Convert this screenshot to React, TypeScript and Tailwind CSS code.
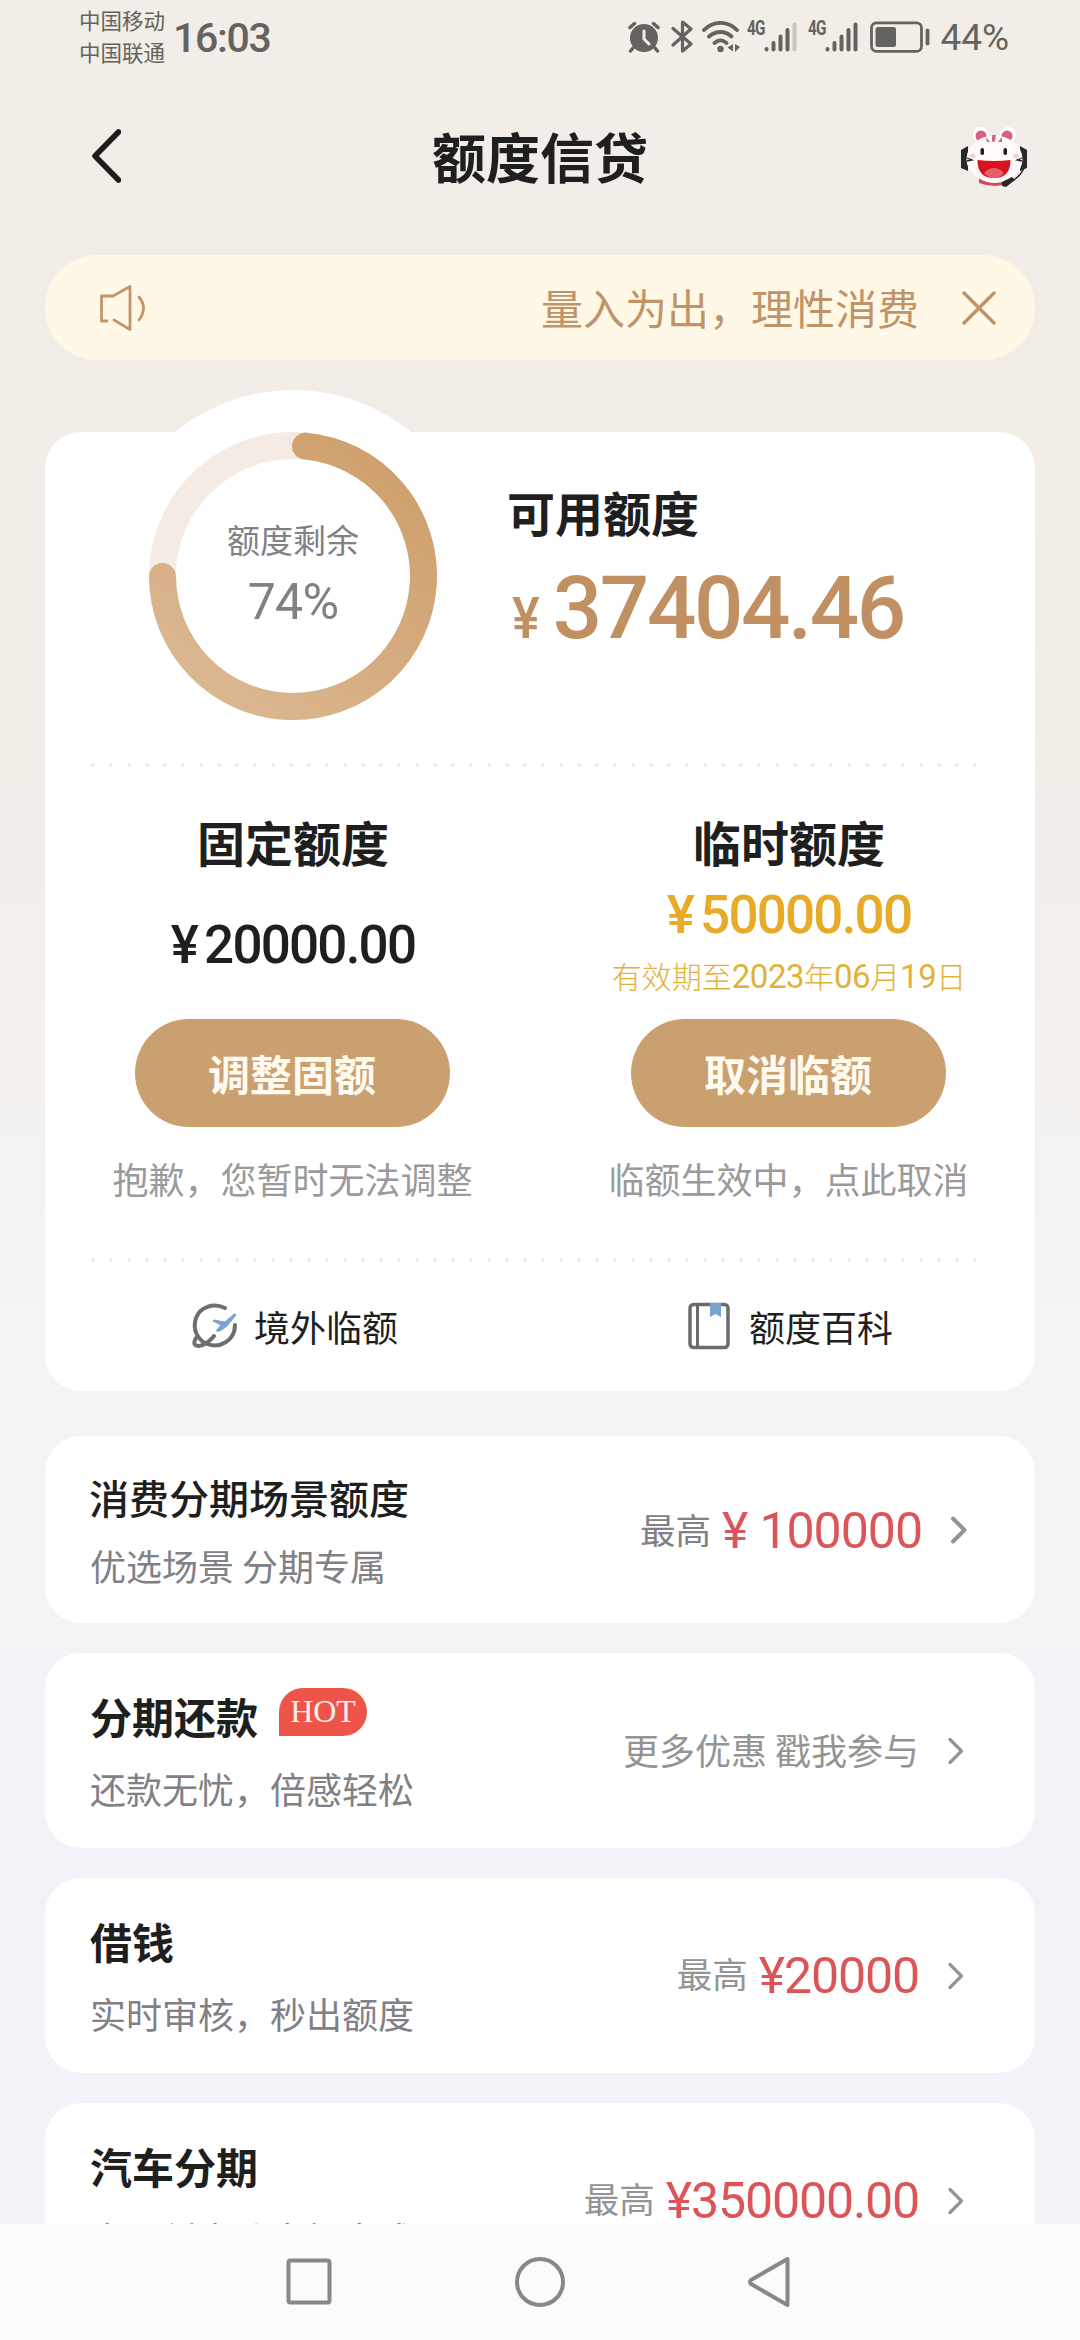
import clsx from 'clsx';

interface ProductCardProps {
  title: string;
  subtitle: string;
  prefix?: string;
  amount?: string;
  note?: string;
  hot?: boolean;
}

const products: ProductCardProps[] = [
  { title: '分期还款', subtitle: '还款无忧，倍感轻松', note: '更多优惠 戳我参与', hot: true },
  { title: '借钱', subtitle: '实时审核，秒出额度', prefix: '最高', amount: '¥20000' },
  { title: '汽车分期', subtitle: '享用低定价享轻享成', prefix: '最高', amount: '¥350000.00' },
];

const Signal = ({ weak }: { weak?: boolean }) => (
  <div className="flex items-start">
    <span className="w-[17px] h-[20px] -mt-[3px] font-[Roboto] font-bold text-[18px] leading-[20px] tracking-[-1px] origin-left scale-x-85 scale-y-110">4G</span>
    <svg className="w-[33px] h-8" viewBox="17 0 33 32" fill="none" stroke="#65635e" strokeWidth="4" strokeLinecap="round">
      <path d="M19.500 28v.5M26.500 22v6.500M33.500 15.500v13M40.500 9v19.500" />
      <path d="M47.500 3.500v25" stroke={weak ? '#c9c5bf' : '#65635e'} />
    </svg>
  </div>
);

const StatusBar = () => (
  <div className="h-[76px] flex items-start pl-[79px] text-[#65635e]">
    <div className="text-[21.500px] leading-8 pt-[4px] w-[94px] whitespace-nowrap">
      <div>中国移动</div>
      <div>中国联通</div>
    </div>
    <div className="font-[Roboto] font-medium text-[41px] leading-[76px] tracking-[-1.3px]">16:03</div>
    <div className="ml-auto flex items-center pt-[19px] pr-[71px]">
      <svg className="w-8 h-8" viewBox="0 0 32 32" fill="none" strokeLinecap="round">
        <circle cx="16" cy="17" r="14" fill="#65635e" />
        <path d="M2 6.500 6.500 2.500M30 6.500l-4.500-4M5 27l-2.500 3M27 27l2.500 3" stroke="#65635e" strokeWidth="3.500" />
        <path d="M16 10v8l5 5" stroke="#f2ede7" strokeWidth="3" />
      </svg>
      <svg className="w-[22px] h-[33px] ml-[11px]" viewBox="0 0 22 33" fill="none" stroke="#65635e" strokeWidth="3.200" strokeLinecap="round" strokeLinejoin="round">
        <path d="M2 8.500 20 24l-8.500 7V2L20 9 2 25" />
      </svg>
      <svg className="w-[38px] h-8 ml-[9px]" viewBox="0 0 38 32" fill="none" stroke="#65635e" strokeWidth="3.800" strokeLinecap="round">
        <path d="M2 9C11-.500 26-.500 35 9M7 15.500c7-6 16-6 22.500 0M12.500 22c4-3.500 8-3.500 12 0" />
        <circle cx="18.500" cy="28" r="3.200" fill="#65635e" stroke="none" />
        <path d="m31 23v7.500l-5.500-4zM33 23v8l5-5z" fill="#65635e" stroke="none" />
      </svg>
      <div className="ml-[7px] flex gap-[11px]">
        <Signal weak />
        <Signal />
      </div>
      <svg className="w-[60px] h-8 ml-[12px]" viewBox="0 0 60 32" fill="none" stroke="#65635e">
        <rect x="1.500" y="1.800" width="50" height="28.500" rx="5" strokeWidth="2.800" />
        <rect x="5.500" y="6" width="20.500" height="20" rx="2.500" fill="#65635e" stroke="none" />
        <path d="M57.500 9.500v13" strokeWidth="3.800" strokeLinecap="round" />
      </svg>
      <span className="ml-[11px] font-[Roboto] text-[37px] leading-8 tracking-[-0.1px] pt-[3px]">44%</span>
    </div>
  </div>
);

const Mascot = () => (
  <svg className="w-[70px] h-[64px]" viewBox="0 0 70 64">
    <path d="M20 52q15 10 32 0v5q-16 6-32 0z" fill="#d4475c" />
    <path d="M9 20 2 24v18l7 3zM61 20l7 4v18l-7 3z" fill="#27282a" />
    <circle cx="22" cy="9" r="8" fill="#fff" />
    <circle cx="49" cy="9" r="8" fill="#fff" />
    <circle cx="22" cy="10" r="5.500" fill="#d9607a" />
    <circle cx="48" cy="10" r="5.500" fill="#d9607a" />
    <ellipse cx="35.500" cy="33" rx="28" ry="23.500" fill="#fefafa" />
    <path d="m27 11 4 5h-3zM43 11l-4 5h4zM33 9h4l-1 6q-1.500 2-3 0z" fill="#cf6b80" />
    <ellipse cx="13.500" cy="30" rx="3" ry="2" fill="#f5cfd3" />
    <ellipse cx="57" cy="30" rx="3" ry="2" fill="#f5cfd3" />
    <rect x="21.500" y="22" width="3.500" height="7" rx="1.700" fill="#1c1c1e" />
    <rect x="44.500" y="22" width="3.500" height="7" rx="1.700" fill="#1c1c1e" />
    <path d="M18.500 34q17 2 33 0 0 18-16.500 18T18.500 34" fill="#d8121f" />
    <path d="M25 47q10-10 20 0-4 5-10 5t-10-5" fill="#e4616c" />
    <path d="m8 32 5 2-5 1M63 32l-5 2 5 1M65 42q-4 10-16 15" fill="none" stroke="#27282a" strokeWidth="1.300" />
    <path d="m43 56 10-5 3 3-9 7-4-1z" fill="#27282a" />
  </svg>
);

const Header = () => (
  <div className="h-[179px] pt-[50px] flex items-start justify-between pl-[91px] pr-[51px]">
    <svg className="w-[30px] h-[60px]" viewBox="0 0 30 60" fill="none" stroke="#1f1c1a" strokeWidth="5.500" strokeLinecap="round" strokeLinejoin="round">
      <path d="M27.500 6 4 30l23.500 24" />
    </svg>
    <h1 className="text-[54px] leading-[60px] font-bold text-[#1f1f1f]">额度信贷</h1>
    <Mascot />
  </div>
);

const Banner = () => (
  <div className="mx-[45px] h-[105px] rounded-full bg-[#fff8e7] flex items-center pl-[54px] pr-[39px]">
    <svg className="w-12 h-12" viewBox="0 0 48 48" fill="none" stroke="#c2966a" strokeWidth="2.800" strokeLinecap="round" strokeLinejoin="round">
      <path d="M8 37H2.500V12H14L31 2.500v43L15 36M40 13q9 11 0 23" />
    </svg>
    <span className="ml-auto text-[42px] leading-[58px] -mt-[2px] text-[#bf9468]">量入为出，理性消费</span>
    <svg className="w-[34px] h-[34px] ml-[43px]" viewBox="0 0 34 34" fill="none" stroke="#bf9468" strokeWidth="3.500" strokeLinecap="round">
      <path d="m2 2 30 30M32 2 2 32" />
    </svg>
  </div>
);

// Arc runs clockwise from just past 12 o'clock round to 9 o'clock
const LimitRing = () => (
  <div className="w-[372px] h-[372px] -mt-[42px] ml-[62px] rounded-full bg-white grid place-items-center">
    <svg className="col-start-1 row-start-1" width="288" height="288" viewBox="0 0 288 288" fill="none" strokeWidth="27">
      <defs>
        <linearGradient id="ring" x1="0.900" y1="0.1" x2="0.2" y2="1">
          <stop offset="0" stopColor="#cfa06d" />
          <stop offset="1" stopColor="#dbb791" />
        </linearGradient>
      </defs>
      <circle cx="144" cy="144" r="130.500" stroke="#f4ece4" />
      <path d="M156.500 14.100A130.500 130.500 0 1 1 13.500 144.500" stroke="url(#ring)" strokeLinecap="round" />
    </svg>
    <div className="col-start-1 row-start-1 text-center text-[#808085]">
      <div className="text-[33px] leading-[50px]">额度剩余</div>
      <div className="mt-[2px] font-[Roboto] text-[50px] leading-[72px] -tracking-[0.8px]">74%</div>
    </div>
  </div>
);

const DottedLine = () => (
  <svg className="block ml-[46px] w-[888px] h-[4px]" viewBox="0 0 888 4">
    <path d="M2 2H888" stroke="#e8e8e8" strokeWidth="3.300" strokeDasharray="0 18" strokeLinecap="round" />
  </svg>
);

interface LimitColumnProps {
  title: string;
  button: string;
  caption: string;
  children: React.ReactNode;
}

const LimitColumn = ({ title, button, caption, children }: LimitColumnProps) => (
  <div className="w-[496px] flex flex-col items-center">
    <h2 className="text-[48px] leading-[60px] font-bold text-[#1f1f1f]">{title}</h2>
    <div className="h-[148px] flex flex-col items-center">{children}</div>
    <button className="w-[315px] h-[108px] -ml-[2px] rounded-full bg-[#cba070] text-[42px] leading-[60px] font-bold text-[#fffaf0]">
      {button}
    </button>
    <p className="mt-[26px] -ml-px text-[36px] leading-[50px] text-[#9a9a9a] whitespace-nowrap">{caption}</p>
  </div>
);

const amountClass = 'font-[Roboto] font-medium text-[53px] leading-[60px] -tracking-[1.8px]';

const Chevron = ({ bold }: { bold?: boolean }) => (
  <svg className={clsx('w-[18px] h-[30px]', bold ? 'ml-[28px]' : 'ml-[28px]')} viewBox="0 0 18 30" fill="none" stroke="#949494" strokeWidth={bold ? 4 : 3.2} strokeLinecap="round" strokeLinejoin="round">
    <path d="m3 3.500 11.500 11.500L3 26.500" />
  </svg>
);

const ProductCard = ({ title, subtitle, prefix, amount, note, hot }: ProductCardProps) => (
  <div className="h-[195px] shrink-0 rounded-[36px] bg-white flex items-center pl-[45px] pr-[70px]">
    <div>
      <div className="flex items-center h-[60px]">
        <h3 className="text-[42px] leading-[60px] font-bold text-[#1f1f1f]">{title}</h3>
        {hot && (
          <span className="ml-[21px] mb-[8px] w-[88px] h-[48px] rounded-[24px] rounded-bl-none bg-[#ee5449] text-center font-['Liberation_Serif'] text-[32px] leading-[47px] text-[#fff3ee]">
            HOT
          </span>
        )}
      </div>
      <p className="mt-[15px] mb-px text-[36px] leading-[54px] text-[#808085]">{subtitle}</p>
    </div>
    <div className="ml-auto flex items-center">
      {note && <span className="text-[36px] leading-[54px] text-[#949494] -mt-[4px]">{note}</span>}
      {prefix && <span className="text-[35.500px] leading-[54px] text-[#949494] -mt-[6px]">{prefix}</span>}
      {amount && (
        <span className="ml-[11px] font-[Roboto] text-[50px] leading-[54px] -tracking-[1.1px] text-[#dc5458]">{amount}</span>
      )}
      <Chevron />
    </div>
  </div>
);

const NavBar = () => (
  <div className="h-[116px] shrink-0 bg-[#fbfbfb]">
    <svg className="w-full h-[116px]" viewBox="0 0 1080 116" fill="none" stroke="#888" strokeWidth="4" strokeLinejoin="round">
      <rect x="288.500" y="36.500" width="41" height="42" rx="2" />
      <circle cx="540" cy="58" r="23" />
      <path d="M787.500 35v46L751 60q-2-2 0-4z" />
    </svg>
  </div>
);

export default function App() {
  return (
    <div className="w-[1080px] h-[2340px] overflow-hidden flex flex-col bg-[linear-gradient(#f2ede7_0px,#f2ece7_750px,#f4f4f4_1330px,#f4f4f4_1640px,#f2f3f8_1670px)] font-['Noto_Sans_CJK_SC',sans-serif]">
      <StatusBar />
      <Header />
      <Banner />

      <section className="mx-[45px] mt-[72px] h-[959px] shrink-0 rounded-[36px] bg-white">
        <div className="flex h-[331px]">
          <LimitRing />
          <div className="ml-[28px] pt-[49px]">
            <h2 className="text-[48px] leading-[60px] font-bold text-[#1f1f1f]">可用额度</h2>
            <div className="mt-[17px] flex items-baseline font-[Roboto] font-medium text-[#c09062]">
              <span className="text-[58px] leading-[100px] ml-[5px] origin-left scale-x-90">¥</span>
              <span className="ml-[10px] text-[87px] leading-[100px] -tracking-[2.4px]">37404.46</span>
            </div>
          </div>
        </div>
        <DottedLine />

        <div className="mt-[44px] flex w-[992px]">
          <LimitColumn title="固定额度" button="调整固额" caption="抱歉，您暂时无法调整">
            <div className={clsx(amountClass, 'mt-[44px] text-[#1f1f1f]')}>
              <span className="mr-[7px]">¥</span>20000.00
            </div>
          </LimitColumn>
          <LimitColumn title="临时额度" button="取消临额" caption="临额生效中，点此取消">
            <div className={clsx(amountClass, 'mt-[14px] text-[#e7ab28]')}>
              <span className="mr-[7px]">¥</span>50000.00
            </div>
            <div className="text-[30px] leading-[60px] font-light text-[#e2b13c] whitespace-nowrap">
              有效期至<span className="font-[Roboto] font-normal text-[33px] -tracking-[0.5px]">2023</span>年
              <span className="font-[Roboto] font-normal text-[33px] -tracking-[0.5px]">06</span>月
              <span className="font-[Roboto] font-normal text-[33px] -tracking-[0.5px]">19</span>日
            </div>
          </LimitColumn>
        </div>

        <div className="mt-[55px]">
          <DottedLine />
        </div>
        <div className="mt-[34px] flex w-[992px] text-[36px] leading-[60px] text-[#1f1f1f]">
          <div className="w-[496px] pl-[147px] flex items-center">
            <svg className="w-[46px] h-[46px] mr-[16px]" viewBox="0 0 46 46" fill="none" stroke="#6e6e6e" strokeWidth="4" strokeLinecap="round" strokeLinejoin="round">
              <path d="M33 5C21-.500 8 4 4 15 0 27 6 36 13 40c15 7 30-3 30-18" />
              <path d="M4 35c-3 5-2 8 3 8 6-1 11-5 15-10" />
              <path d="m42 11-9 8-11-2-1 1 8 4-5 6h4l7-5 9-11z" fill="#7aa3d0" stroke="#7aa3d0" strokeWidth="1" />
            </svg>
            境外临额
          </div>
          <div className="w-[496px] pl-[146px] flex items-center">
            <svg className="w-[44px] h-[48px] mr-[18px]" viewBox="0 0 44 48" fill="none" stroke="#6b6b6b" strokeWidth="3.500">
              <rect x="3" y="2.500" width="38" height="43" rx="3.500" />
              <path d="M10.500 2.500v43" strokeWidth="3" />
              <path d="M23 1h11v14l-5.500-3L23 15z" fill="#7aa3d0" stroke="none" />
            </svg>
            额度百科
          </div>
        </div>
      </section>

      <div className="mx-[45px] mt-[45px] h-[788px] overflow-hidden flex flex-col gap-[30px]">
        <div className="h-[187px] shrink-0 rounded-[36px] bg-white flex items-center pl-[44px] pr-[67px]">
          <div>
            <h3 className="text-[40px] leading-[60px] font-medium text-[#1f1f1f]">消费分期场景额度</h3>
            <p className="mt-[11px] mb-px ml-px text-[36px] leading-[54px] text-[#808085]">优选场景 分期专属</p>
          </div>
          <div className="ml-auto flex items-center">
            <span className="text-[35.500px] leading-[54px] text-[#808085] -mt-[2px]">最高</span>
            <span className="mt-[3px] ml-[11px] font-[Roboto] text-[50px] leading-[54px] -tracking-[1px] text-[#dc5458]">
              ¥<span className="ml-[12px]">100000</span>
            </span>
            <Chevron bold />
          </div>
        </div>
        {products.map(product => (
          <ProductCard key={product.title} {...product} />
        ))}
      </div>

      <NavBar />
    </div>
  );
}
